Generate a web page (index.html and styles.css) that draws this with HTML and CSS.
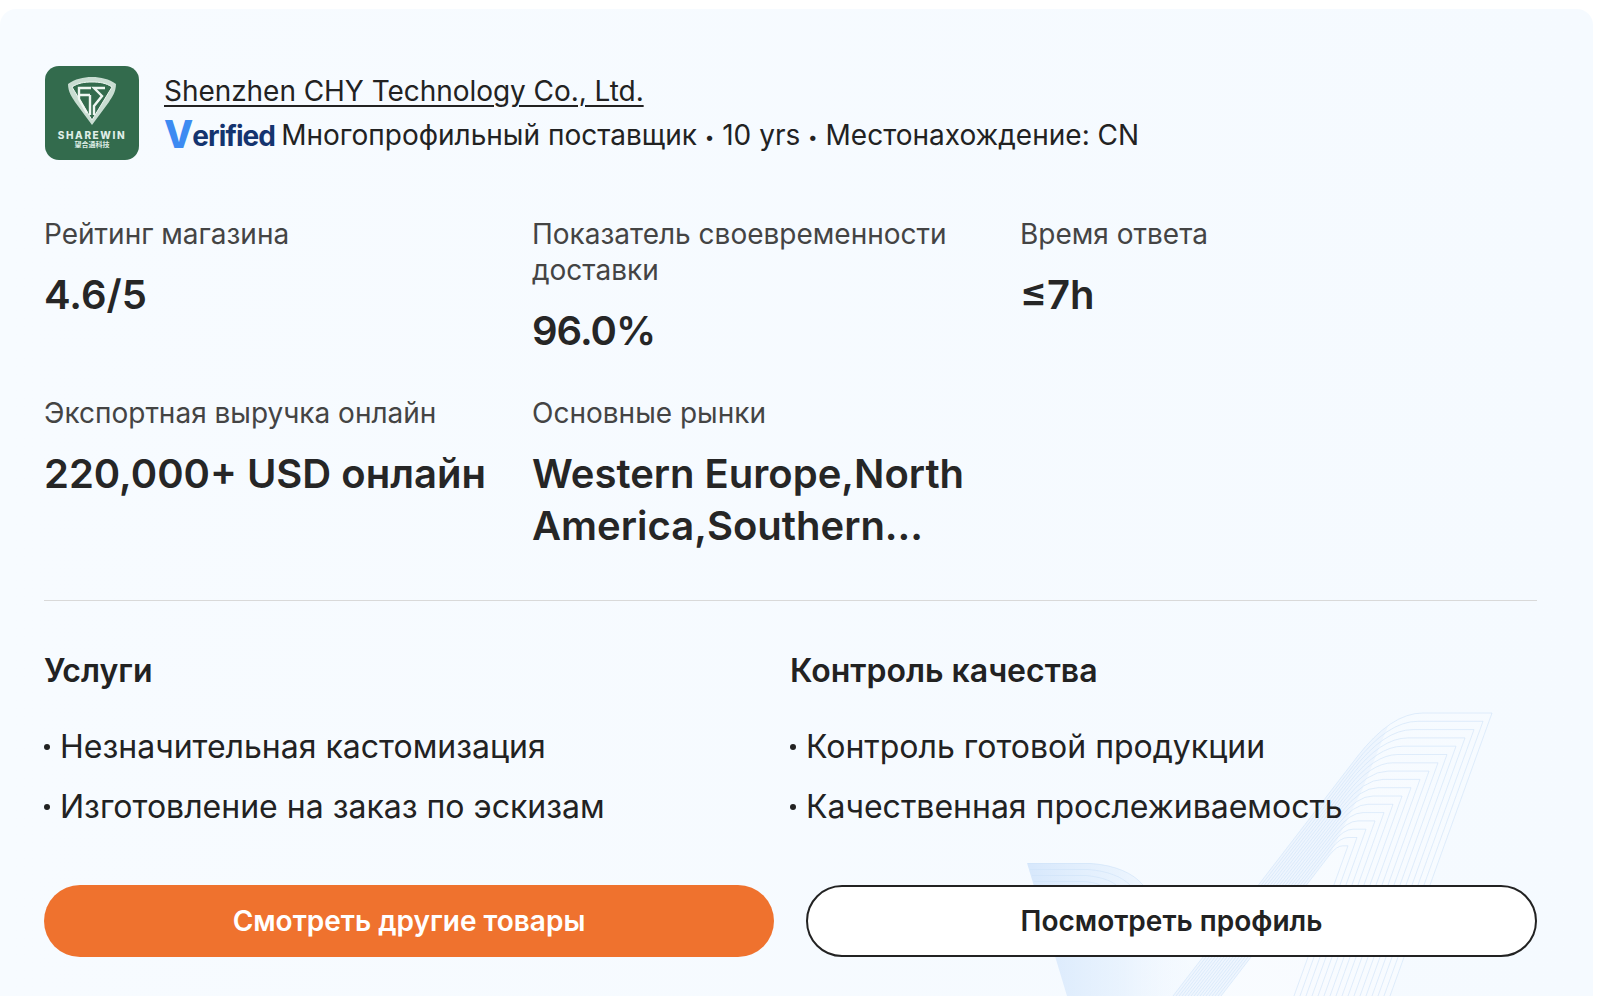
FILE: index.html
```html
<!DOCTYPE html>
<html lang="ru">
<head>
<meta charset="utf-8">
<title>Shenzhen CHY Technology Co., Ltd.</title>
<link rel="stylesheet" href="styles.css">
</head>
<body>
<main class="card">
  <svg class="deco" viewBox="1000 699 600 297" aria-hidden="true">
    <defs>
      <linearGradient id="wing" x1="0" y1="0" x2="1" y2="0">
        <stop offset="0" stop-color="#cfe3fb" stop-opacity=".8"/>
        <stop offset=".55" stop-color="#e2effd" stop-opacity=".6"/>
        <stop offset="1" stop-color="#f4f9ff" stop-opacity="0"/>
      </linearGradient>
      <linearGradient id="tail" x1="0" y1="1" x2="1" y2="0">
        <stop offset="0" stop-color="#ffffff" stop-opacity=".35"/>
        <stop offset="1" stop-color="#ffffff" stop-opacity=".1"/>
      </linearGradient>
    </defs>
    <path class="wing" d="M1027 863 L1090 863 C1115 865 1133 873 1143 885 L1187 960 L1205 996 L1067 996 Z"/>
    <path class="tail" d="M1173 996 L1357 757 Q1391 713 1423 713 L1492 713 L1390 996 Z"/>
    <path class="band" d="M1173 996 L1357 757 Q1372 737 1388 726 L1362 790 L1329.9 854.6 L1221 996 Z"/>
    <g class="lines">
      <path d="M1173 996 L1357 757 Q1390.9 713 1422.9 713 L1492 713 L1390 996"/>
      <path d="M1176 996 L1355.3 763.1 Q1387.5 721.3 1417.9 721.3 L1483 721.3 L1384 996"/>
      <path d="M1179 996 L1353.6 769.2 Q1384.1 729.6 1412.9 729.6 L1474 729.6 L1378 996"/>
      <path d="M1182 996 L1351.9 775.3 Q1380.7 737.9 1407.9 737.9 L1465 737.9 L1372 996"/>
      <path d="M1185 996 L1350.2 781.4 Q1377.3 746.2 1402.9 746.2 L1456 746.2 L1366 996"/>
      <path d="M1188 996 L1348.5 787.5 Q1373.9 754.5 1397.9 754.5 L1447 754.5 L1360 996"/>
      <path d="M1191 996 L1346.9 793.6 Q1370.6 762.8 1393 762.8 L1438 762.8 L1354 996"/>
      <path d="M1194 996 L1345.2 799.7 Q1367.2 771.1 1388 771.1 L1429 771.1 L1348 996"/>
      <path d="M1197 996 L1343.5 805.8 Q1363.8 779.4 1383 779.4 L1420 779.4 L1342 996"/>
      <path d="M1200 996 L1341.8 811.9 Q1360.4 787.7 1378 787.7 L1411 787.7 L1336 996"/>
      <path d="M1203 996 L1340 818 Q1357 796 1373 796 L1402 796 L1330 996"/>
      <path d="M1206 996 L1338.3 824.1 Q1353.6 804.3 1368 804.3 L1393 804.3 L1324 996"/>
      <path d="M1209 996 L1336.6 830.2 Q1350.2 812.6 1363 812.6 L1384 812.6 L1318 996"/>
      <path d="M1212 996 L1335 836.3 Q1346.8 820.9 1358 820.9 L1375 820.9 L1312 996"/>
      <path d="M1215 996 L1333.2 842.4 Q1343.4 829.2 1353 829.2 L1366 829.2 L1306 996"/>
      <path d="M1218 996 L1331.5 848.5 Q1340 837.5 1348 837.5 L1357 837.5 L1300 996"/>
      <path d="M1221 996 L1329.9 854.6 Q1336.7 845.8 1343 845.8 L1348 845.8 L1294 996"/>
      <path d="M1028 863.5 L1090 863.5 C1115 865 1133 873 1143 885"/>
      <path d="M1030 869.5 L1088 869.5 C1108 871 1122 877 1130 885"/>
      <path d="M1032 875.5 L1086 875.5 C1100 877 1110 880 1116 885"/>
      <path d="M1034 881.5 L1084 881.5 C1090 882 1096 883 1100 885"/>
    </g>
  </svg>

  <header class="company">
    <div class="logo">
      <svg class="shield" viewBox="0 0 48 48" aria-hidden="true">
        <path class="shield-outer" d="M24 0 C33 0 41 2 48 7 C48 15 44 20 41 25 L24 48 L7 25 C4 20 0 15 0 7 C7 2 15 0 24 0Z"/>
        <path class="shield-inner" d="M24 5 C32 5 38 6 44 10 L24 43 L4 10 C10 6 16 5 24 5Z"/>
        <path class="shield-mark" d="M23 11 H11 V22 L19 36 M11 18 H22 M22 18 V38 M37 11 H26 L34 19 L26 29 V38"/>
      </svg>
      <span class="logo-name">SHAREWIN</span>
      <span class="logo-sub">望合通科技</span>
    </div>
    <div class="company-text">
      <a class="company-name" href="#">Shenzhen CHY Technology Co., Ltd.</a>
      <div class="company-meta">
        <span class="verified"><span class="verified-v">V</span>erified</span>
        <span>Многопрофильный поставщик <span class="dot">•</span> 10 yrs <span class="dot">•</span> Местонахождение: CN</span>
      </div>
    </div>
  </header>

  <section class="stats">
    <div class="stat">
      <div class="stat-label">Рейтинг магазина</div>
      <div class="stat-value">4.6/5</div>
    </div>
    <div class="stat">
      <div class="stat-label">Показатель своевременности доставки</div>
      <div class="stat-value stat-value-tight">96.0%</div>
    </div>
    <div class="stat">
      <div class="stat-label">Время ответа</div>
      <div class="stat-value">≤7h</div>
    </div>
    <div class="stat">
      <div class="stat-label">Экспортная выручка онлайн</div>
      <div class="stat-value">220,000+ USD онлайн</div>
    </div>
    <div class="stat">
      <div class="stat-label">Основные рынки</div>
      <div class="stat-value">Western Europe,North America,Southern…</div>
    </div>
  </section>

  <section class="features">
    <div class="feature">
      <h3 class="feature-title">Услуги</h3>
      <ul class="feature-list">
        <li>Незначительная кастомизация</li>
        <li>Изготовление на заказ по эскизам</li>
      </ul>
    </div>
    <div class="feature">
      <h3 class="feature-title">Контроль качества</h3>
      <ul class="feature-list">
        <li>Контроль готовой продукции</li>
        <li>Качественная прослеживаемость</li>
      </ul>
    </div>
  </section>

  <div class="actions">
    <a class="btn btn-primary" href="#">Смотреть другие товары</a>
    <a class="btn btn-outline" href="#">Посмотреть профиль</a>
  </div>
</main>
</body>
</html>
```
FILE: styles.css
```css
* { box-sizing: border-box; }
html, body { margin: 0; height: 996px; overflow: hidden; background: #fff; }
body {
  padding: 9px 11px 0 0;
  font-family: Inter, "Liberation Sans", sans-serif;
  color: #222;
}
.card {
  position: relative;
  height: 987px;
  padding: 57px 56px 0 44px;
  background: linear-gradient(90deg, #f7fbff, #f5faff);
  border-radius: 16px 16px 0 0;
  overflow: hidden;
}
.deco {
  position: absolute;
  left: 1000px;
  top: 690px;
  width: 600px;
  height: 297px;
}
.wing { fill: url(#wing); }
.tail { fill: url(#tail); }
.band { fill: #dcebfc; opacity: .35; }
.lines path { fill: none; stroke: #cfe2f9; stroke-width: 1; opacity: .6; }
.company, .stats, .features, .actions { position: relative; }

.company { display: flex; align-items: center; gap: 25px; }
.logo {
  width: 94px;
  height: 94px;
  margin-left: 1px;
  flex: none;
  display: flex;
  flex-direction: column;
  align-items: center;
  padding-top: 11px;
  background: #336b4d;
  border-radius: 14px;
  color: #dfeee6;
}
.shield { width: 48px; height: 48px; flex: none; }
.shield-outer { fill: #c9ddd2; }
.shield-inner { fill: #336b4d; stroke: #eef6f1; stroke-width: 1; }
.shield-mark { fill: none; stroke: #eef6f1; stroke-width: 2.4; }
.logo-name { margin-top: 6px; font-size: 10px; line-height: 9px; font-weight: 800; letter-spacing: 1.6px; white-space: nowrap; }
.logo-sub { font-family: "Noto Sans CJK SC", sans-serif; font-size: 7px; line-height: 8px; font-weight: 700; }
.company-text { display: flex; flex-direction: column; gap: 9px; }
.company-name { font-size: 28px; line-height: 36px; letter-spacing: -.05px; color: #222; text-decoration: underline; text-underline-offset: 4px; text-decoration-thickness: 2px; }
.company-meta { display: flex; align-items: center; gap: 6px; height: 36px; font-size: 28px; line-height: 36px; }
.dot { font-size: 17px; vertical-align: 2px; }
.verified { font-size: 28px; line-height: 30px; font-weight: 700; color: #14346f; letter-spacing: -.9px; white-space: nowrap; }
.verified-v {
  font-size: 38px;
  font-weight: 800;
  color: #3d8bf2;
  line-height: 28px;
  letter-spacing: -1px;
  vertical-align: -2px;
}

.stats {
  display: grid;
  grid-template-columns: repeat(3, 488px);
  row-gap: 38px;
  margin-top: 56px;
  padding-bottom: 48px;
  border-bottom: 1px solid #d9d9d9;
}
.stat-label { font-size: 28px; line-height: 36px; color: #444; padding-right: 20px; }
.stat-value { margin-top: 17px; font-size: 40px; line-height: 52px; font-weight: 600; color: #262626; padding-right: 40px; }
.stat-value-tight { letter-spacing: -1px; }

.features { display: grid; grid-template-columns: 746px 746px; margin-top: 48px; }
.feature-title { margin: 0; font-size: 32px; line-height: 44px; font-weight: 600; color: #222; }
.feature-list { margin: 34px 0 0; padding: 0; list-style: none; display: flex; flex-direction: column; gap: 20px; }
.feature-list li { position: relative; padding-left: 16px; font-size: 32px; line-height: 40px; }
.feature-list li::before {
  content: "";
  position: absolute;
  left: 0;
  top: 17px;
  width: 6px;
  height: 6px;
  border-radius: 50%;
  background: #222;
}

.actions { display: grid; grid-template-columns: 730px 1fr; column-gap: 32px; margin-top: 58px; }
.btn {
  display: flex;
  align-items: center;
  justify-content: center;
  height: 72px;
  border-radius: 36px;
  font-size: 28px;
  font-weight: 600;
  text-decoration: none;
}
.btn-primary { background: #ef722e; color: #fff; }
.btn-outline { background: #fff; color: #222; border: 2px solid #222; }
```
